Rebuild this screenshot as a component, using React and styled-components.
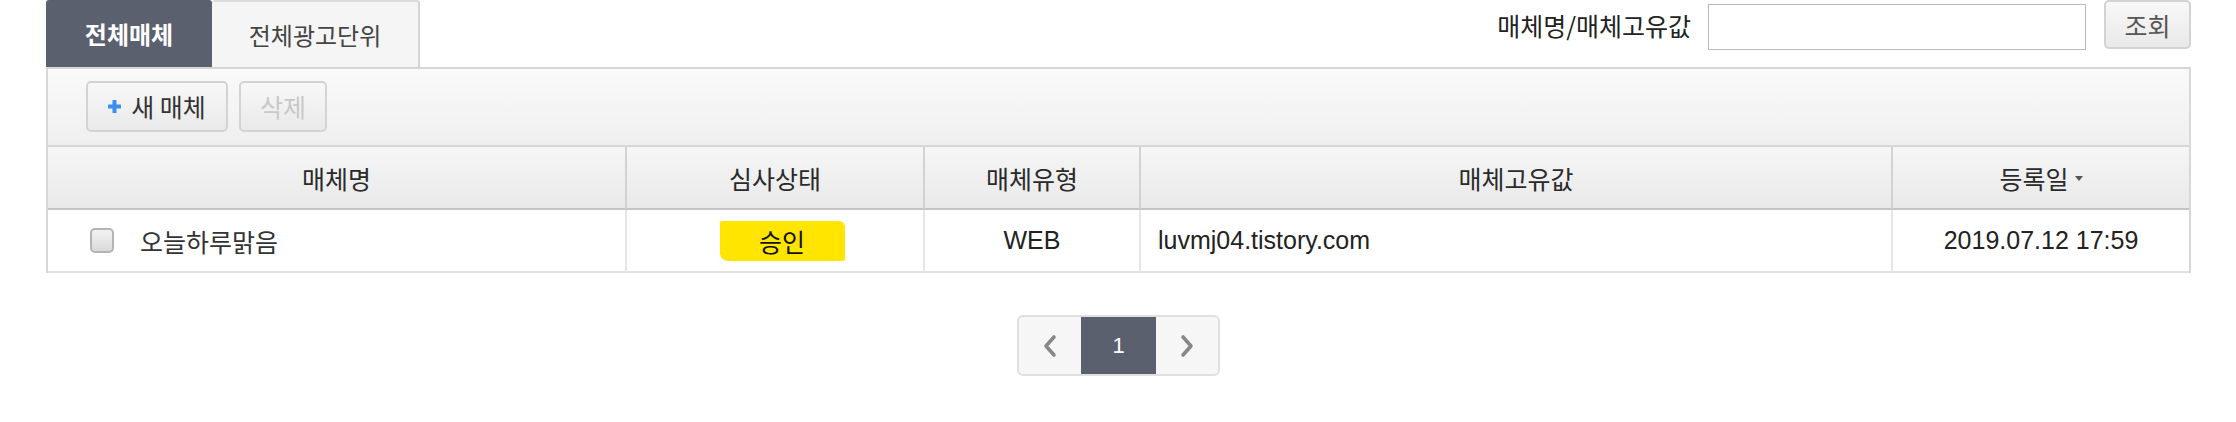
import React from "react";
import styled, { createGlobalStyle } from "styled-components";

const GlobalStyle = createGlobalStyle`
  html, body {
    margin: 0;
    padding: 0;
    background: #fff;
  }
  body {
    font-family: "Liberation Sans", "Noto Sans CJK KR", sans-serif;
    color: #333;
  }
`;

const Page = styled.div`
  width: 2145px;
  margin-left: 46px;
`;

const TopBar = styled.div`
  display: flex;
  justify-content: space-between;
  align-items: flex-start;
  height: 67px;
`;

const Tabs = styled.div`
  display: flex;
  height: 67px;
`;

const Tab = styled.div`
  display: flex;
  align-items: center;
  justify-content: center;
  box-sizing: border-box;
  width: ${(p) => p.$width}px;
  height: 67px;
  font-size: 24px;
  font-family: "Noto Sans CJK KR", sans-serif;
  font-weight: ${(p) => (p.$active ? 700 : 400)};
  color: ${(p) => (p.$active ? "#fff" : "#444")};
  background: ${(p) => (p.$active ? "#5a606e" : "#f5f5f5")};
  border-top: ${(p) => (p.$active ? "none" : "2px solid #dcdcdc")};
  border-right: ${(p) => (p.$active ? "none" : "2px solid #d4d4d4")};
  border-radius: 3px 3px 0 0;
`;

const Search = styled.div`
  display: flex;
  align-items: center;
  height: 49px;
`;

const SearchLabel = styled.span`
  font-size: 25px;
  font-family: "Noto Sans CJK KR", sans-serif;
  color: #222;
  margin-right: 17px;
`;

const SearchInput = styled.input`
  box-sizing: border-box;
  width: 378px;
  height: 46px;
  margin-top: 5px;
  border: 1px solid #b9b9b9;
  outline: none;
  margin-right: 18px;
`;

const Button = styled.button`
  display: inline-flex;
  align-items: center;
  justify-content: center;
  gap: 10px;
  box-sizing: border-box;
  width: ${(p) => p.$width}px;
  height: ${(p) => p.$height || 51}px;
  padding: 0;
  border: 2px solid #d3d3d3;
  border-radius: 5px;
  background: linear-gradient(#f8f8f8, #e9e9e9);
  font-family: "Noto Sans CJK KR", sans-serif;
  font-size: 25px;
  color: ${(p) => (p.disabled ? "#c8c8c8" : p.$muted ? "#555" : "#333")};
`;

const Panel = styled.div`
  border-left: 2px solid #d8d8d8;
  border-right: 2px solid #d8d8d8;
`;

const Toolbar = styled.div`
  display: flex;
  align-items: center;
  gap: 11px;
  height: 80px;
  box-sizing: border-box;
  padding-left: 38px;
  padding-bottom: 2px;
  border-top: 2px solid #d6d6d6;
  border-bottom: 2px solid #d6d6d6;
  background: linear-gradient(#fafafa, #efefef);
`;

const Plus = styled.svg`
  width: 13px;
  height: 13px;
  flex: none;
`;

const Grid = styled.div`
  display: grid;
  grid-template-columns: 577px 298px 216px 752px 1fr;
`;

const HeadCell = styled.div`
  display: flex;
  align-items: center;
  justify-content: center;
  gap: 6px;
  height: 61px;
  background: linear-gradient(#f6f6f6, #e9e9e9);
  border-bottom: 2px solid #c4c4c4;
  border-left: ${(p) => (p.$first ? "none" : "2px solid #d2d2d2")};
  font-family: "Noto Sans CJK KR", sans-serif;
  font-size: 25px;
  color: #2a2a2a;
`;

const Cell = styled.div`
  display: flex;
  align-items: center;
  justify-content: ${(p) => p.$align || "center"};
  box-sizing: border-box;
  height: 63px;
  padding-left: ${(p) => p.$pad || 0}px;
  border-bottom: 2px solid #e2e2e2;
  border-left: ${(p) => (p.$first ? "none" : "2px solid #e6e6e6")};
  font-size: 25px;
  color: #222;
`;

const Checkbox = styled.span`
  display: inline-block;
  box-sizing: border-box;
  width: 24px;
  height: 25px;
  margin-right: 26px;
  border: 2px solid #b4b4b4;
  border-radius: 5px;
  background: linear-gradient(#f2f2f2, #d9d9d9);
`;

const KoText = styled.span`
  font-family: "Noto Sans CJK KR", sans-serif;
  color: #333;
`;

const Highlight = styled.span`
  display: inline-flex;
  align-items: center;
  justify-content: center;
  width: 125px;
  height: 40px;
  margin-left: 14px;
  background: #ffe500;
  border-radius: 2px 6px 3px 8px;
  font-family: "Noto Sans CJK KR", sans-serif;
  color: #111;
`;

const Caret = styled.span`
  width: 0;
  height: 0;
  border-left: 4px solid transparent;
  border-right: 4px solid transparent;
  border-top: 5px solid #555;
  margin-top: 2px;
`;

const Pager = styled.div`
  display: flex;
  justify-content: center;
  margin-top: 42px;
`;

const PagerBox = styled.div`
  display: flex;
  border: 2px solid #e0e0e0;
  border-radius: 6px;
  background: #f6f6f6;
  overflow: hidden;
`;

const PageBtn = styled.div`
  display: flex;
  align-items: center;
  justify-content: center;
  width: ${(p) => (p.$active ? 75 : 62)}px;
  height: 57px;
  background: ${(p) => (p.$active ? "#5a606e" : "transparent")};
  color: #fff;
  font-size: 22px;
`;

const Chevron = ({ dir }) => (
  <svg width="16" height="24" viewBox="0 0 16 24">
    <path
      d={dir === "left" ? "M12 3 L4 12 L12 21" : "M4 3 L12 12 L4 21"}
      fill="none"
      stroke="#888"
      strokeWidth="3.6"
      strokeLinecap="round"
      strokeLinejoin="round"
    />
  </svg>
);

const columns = ["매체명", "심사상태", "매체유형", "매체고유값", "등록일"];

export default function App() {
  return (
    <>
      <GlobalStyle />
      <Page>
        <TopBar>
          <Tabs>
            <Tab $active $width={166}>전체매체</Tab>
            <Tab $width={208}>전체광고단위</Tab>
          </Tabs>
          <Search>
            <SearchLabel>매체명/매체고유값</SearchLabel>
            <SearchInput />
            <Button $width={87} $height={49} $muted>조회</Button>
          </Search>
        </TopBar>
        <Panel>
          <Toolbar>
            <Button $width={142}>
              <Plus viewBox="0 0 13 13">
                <path d="M6.5 1 V12 M1 6.5 H12" stroke="#3d8ef0" strokeWidth="4" strokeLinecap="round" />
              </Plus>
              새 매체
            </Button>
            <Button $width={88} disabled>삭제</Button>
          </Toolbar>
          <Grid>
            {columns.map((c, i) => (
              <HeadCell key={c} $first={i === 0}>
                {c}
                {c === "등록일" && <Caret />}
              </HeadCell>
            ))}
            <Cell $first $align="flex-start" $pad={42}>
              <Checkbox />
              <KoText>오늘하루맑음</KoText>
            </Cell>
            <Cell>
              <Highlight>승인</Highlight>
            </Cell>
            <Cell>WEB</Cell>
            <Cell $align="flex-start" $pad={17}>luvmj04.tistory.com</Cell>
            <Cell>2019.07.12 17:59</Cell>
          </Grid>
        </Panel>
        <Pager>
          <PagerBox>
            <PageBtn><Chevron dir="left" /></PageBtn>
            <PageBtn $active>1</PageBtn>
            <PageBtn><Chevron dir="right" /></PageBtn>
          </PagerBox>
        </Pager>
      </Page>
    </>
  );
}
